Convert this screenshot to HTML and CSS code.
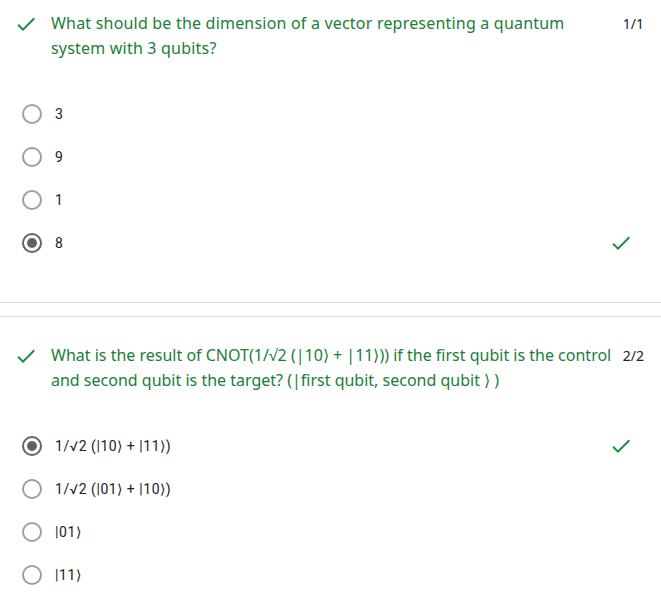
FILE: index.html
```html
<!DOCTYPE html>
<html lang="en">
<head>
<meta charset="utf-8">
<title>Quiz results</title>
<link rel="stylesheet" href="styles.css">
</head>
<body>
<div class="card card-first">
  <div class="q-head">
    <svg class="q-check" viewBox="0 0 24 24" width="24" height="24"><path d="M9 16.17L4.83 12l-1.42 1.41L9 19 21 7l-1.41-1.41z"/></svg>
    <div class="q-text">What should be the dimension of a vector representing a quantum system with 3 qubits?</div>
    <div class="points">1/1</div>
  </div>
  <div class="options">
    <div class="opt"><span class="radio"></span><span class="label">3</span></div>
    <div class="opt"><span class="radio"></span><span class="label">9</span></div>
    <div class="opt"><span class="radio"></span><span class="label">1</span></div>
    <div class="opt"><span class="radio checked"></span><span class="label">8</span>
      <svg class="opt-check" viewBox="0 0 24 24" width="24" height="24"><path d="M9 16.17L4.83 12l-1.42 1.41L9 19 21 7l-1.41-1.41z"/></svg></div>
  </div>
</div>
<div class="gap"></div>
<div class="card card-next">
  <div class="q-head">
    <svg class="q-check" viewBox="0 0 24 24" width="24" height="24"><path d="M9 16.17L4.83 12l-1.42 1.41L9 19 21 7l-1.41-1.41z"/></svg>
    <div class="q-text q-text-tight">What is the result of CNOT(1/√2 (|10⟩ + |11⟩)) if the first qubit is the control and second qubit is the target? (|first qubit, second qubit ⟩ )</div>
    <div class="points">2/2</div>
  </div>
  <div class="options">
    <div class="opt"><span class="radio checked"></span><span class="label">1/√2 (|10⟩ + |11⟩)</span>
      <svg class="opt-check" viewBox="0 0 24 24" width="24" height="24"><path d="M9 16.17L4.83 12l-1.42 1.41L9 19 21 7l-1.41-1.41z"/></svg></div>
    <div class="opt"><span class="radio"></span><span class="label">1/√2 (|01⟩ + |10⟩)</span></div>
    <div class="opt"><span class="radio"></span><span class="label">|01⟩</span></div>
    <div class="opt"><span class="radio"></span><span class="label">|11⟩</span></div>
  </div>
</div>
</body>
</html>
```

FILE: styles.css
```css
html, body {
  margin: 0;
  padding: 0;
  background: #ffffff;
}

body {
  width: 661px;
  height: 614px;
  overflow: hidden;
  font-family: Roboto, "Liberation Sans", sans-serif;
  color: #202124;
}

.card-first {
  padding-top: 11px;
  border-bottom: 1px solid #dadce0;
  padding-bottom: 38px;
}

.card-next {
  border-top: 1px solid #dadce0;
  padding-top: 26px;
}

.gap {
  height: 13px;
}

.q-head {
  display: flex;
  align-items: flex-start;
  padding-left: 14px;
  padding-right: 17px;
}

.q-check {
  flex: none;
  fill: #1e8e3e;
  margin-top: 1px;
  margin-right: 13px;
}

.q-text {
  flex: 1;
  font-family: "Noto Sans", "Open Sans", sans-serif;
  font-size: 16px;
  line-height: 25px;
  color: #188038;
  letter-spacing: 0.2px;
}

.q-text-tight {
  letter-spacing: 0;
}

.points {
  flex: none;
  font-family: "Noto Sans", "Open Sans", sans-serif;
  font-size: 14px;
  line-height: 25px;
  color: #202124;
  margin-left: 2px;
}

.options {
  margin-top: 31px;
}

.opt {
  display: flex;
  align-items: center;
  height: 43px;
  padding-left: 22px;
  padding-right: 28px;
}

.radio {
  flex: none;
  box-sizing: border-box;
  width: 20px;
  height: 20px;
  border: 2px solid #9aa0a6;
  border-radius: 50%;
  display: flex;
  align-items: center;
  justify-content: center;
  margin-right: 13px;
}

.radio.checked {
  border-color: #5f6368;
}

.radio.checked::after {
  content: "";
  width: 10px;
  height: 10px;
  border-radius: 50%;
  background: #5f6368;
}

.label {
  flex: 1;
  font-size: 14px;
  letter-spacing: 0.55px;
  color: #202124;
}

.opt-check {
  flex: none;
  fill: #1e8e3e;
}
```
